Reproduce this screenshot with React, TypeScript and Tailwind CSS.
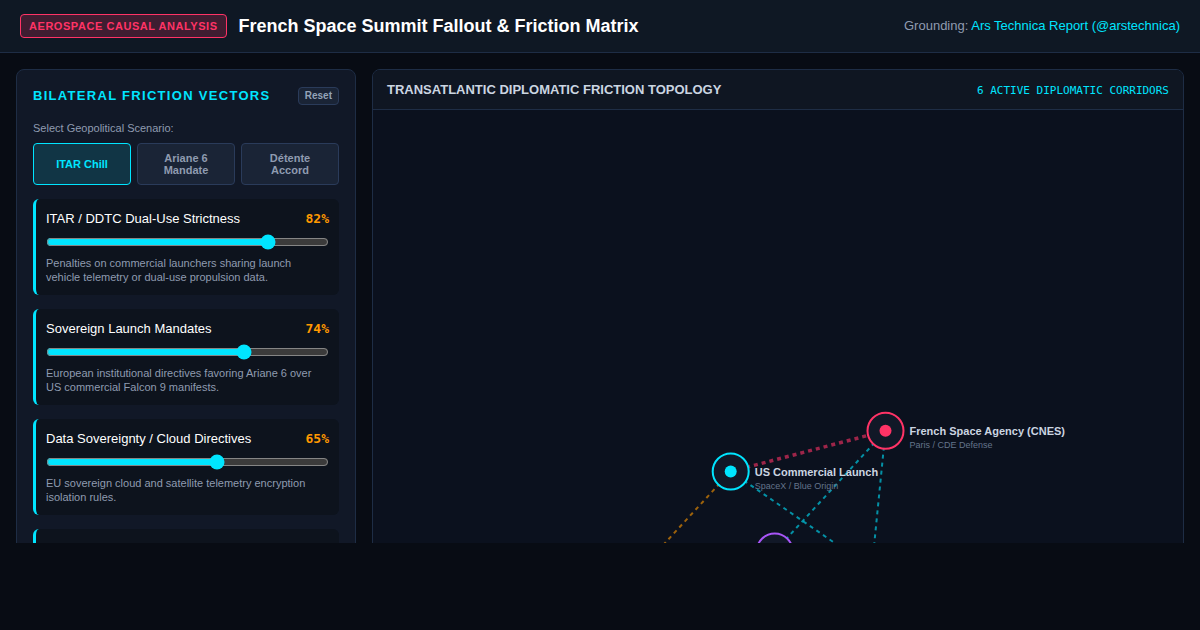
import { useState } from "react";

type Vector = {
  id: string;
  label: string;
  value: number;
  note: string;
};

type Node = {
  id: string;
  x: number;
  y: number;
  color: string;
  name?: string;
  sub?: string;
};

type Link = {
  from: string;
  to: string;
  color: string;
  width: number;
};

const SCENARIOS = [
  { id: "itar", label: "ITAR Chill", values: [82, 74, 65] },
  { id: "ariane", label: "Ariane 6 Mandate", values: [60, 92, 70] },
  { id: "detente", label: "Détente Accord", values: [30, 35, 40] },
];

const VECTORS: Vector[] = [
  {
    id: "ddtc",
    label: "ITAR / DDTC Dual-Use Strictness",
    value: 82,
    note: "Penalties on commercial launchers sharing launch vehicle telemetry or dual-use propulsion data.",
  },
  {
    id: "launch",
    label: "Sovereign Launch Mandates",
    value: 74,
    note: "European institutional directives favoring Ariane 6 over US commercial Falcon 9 manifests.",
  },
  {
    id: "cloud",
    label: "Data Sovereignty / Cloud Directives",
    value: 65,
    note: "EU sovereign cloud and satellite telemetry encryption isolation rules.",
  },
];

const NODES: Node[] = [
  { id: "us", x: 357.7, y: 361.5, name: "US Commercial Launch", sub: "SpaceX / Blue Origin", color: "#00e5ff" },
  { id: "cnes", x: 512.5, y: 320.8, name: "French Space Agency (CNES)", sub: "Paris / CDE Defense", color: "#ff3366" },
  { id: "esa", x: 401.7, y: 441.5, color: "#a855f7" },
  { id: "state", x: 247, y: 482, color: "#ff9900" },
  { id: "ariane", x: 498.8, y: 458.5, color: "#00e5ff" },
];

const LINKS: Link[] = [
  { from: "us", to: "cnes", color: "#ff3366", width: 3.5 },
  { from: "cnes", to: "esa", color: "#00e5ff", width: 2 },
  { from: "cnes", to: "ariane", color: "#00e5ff", width: 2 },
  { from: "us", to: "ariane", color: "#00e5ff", width: 2 },
  { from: "us", to: "state", color: "#ff9900", width: 2 },
];

function VectorCard({ vector, value, onChange }: { vector: Vector; value: number; onChange: (v: number) => void }) {
  return (
    <div className="rounded-md border-l-3 border-[#00e5ff] bg-[#0d131d] px-2.5 pt-2.5 pb-[11px]">
      <div className="mb-[5px] flex items-baseline justify-between text-[13px] leading-5">
        <label htmlFor={vector.id} className="text-white">
          {vector.label}
        </label>
        <span className="font-['DejaVu_Sans_Mono',monospace] leading-4 font-bold text-[#ff9900]">{value}%</span>
      </div>
      <input
        id={vector.id}
        type="range"
        min={10}
        max={100}
        value={value}
        onChange={(e) => onChange(Number(e.target.value))}
        className="mb-1.5 block h-4 w-full accent-[#00e5ff] scheme-dark"
      />
      <p className="pr-2 text-[11px] leading-[14px] text-[#8f9bb0]">{vector.note}</p>
    </div>
  );
}

function Topology() {
  const find = (id: string) => NODES.find((n) => n.id === id)!;

  return (
    <svg width="810" height="640" viewBox="0 0 810 640" role="img" aria-label="Diplomatic friction topology">
      {LINKS.map((l) => {
        const a = find(l.from);
        const b = find(l.to);
        return (
          <line
            key={l.from + l.to}
            x1={a.x}
            y1={a.y}
            x2={b.x}
            y2={b.y}
            stroke={l.color}
            strokeWidth={l.width}
            strokeDasharray="4 4"
            opacity={0.6}
          />
        );
      })}
      {NODES.map((n) => (
        <g key={n.id}>
          <circle cx={n.x} cy={n.y} r="18" fill="#111827" stroke={n.color} strokeWidth="2" />
          <circle cx={n.x} cy={n.y} r="6" fill={n.color} />
          {n.name && (
            <>
              <text x={n.x + 24} y={n.y + 4} fill="#cbd5e1" className="text-[11px] font-bold">
                {n.name}
              </text>
              <text x={n.x + 24} y={n.y + 17} fill="#64748b" className="text-[9px]">
                {n.sub}
              </text>
            </>
          )}
        </g>
      ))}
    </svg>
  );
}

export default function App() {
  const [scenario, setScenario] = useState("itar");
  const [values, setValues] = useState(VECTORS.map((v) => v.value));

  const pick = (id: string) => {
    setScenario(id);
    setValues(SCENARIOS.find((s) => s.id === id)!.values);
  };

  return (
    <div className="min-h-screen bg-[#080c14] font-['Liberation_Sans',Arial,sans-serif] text-white">
      <header className="flex items-center justify-between border-b border-[#1e2d45] bg-[#0f1824] px-5 py-3.5">
        <div className="flex items-center gap-3">
          <span className="rounded-sm border border-[#ff3366] bg-[#3f1d31] px-2 text-[11px] leading-[22px] font-bold tracking-wider text-[#ff3366]">
            AEROSPACE CAUSAL ANALYSIS
          </span>
          <h1 className="text-lg leading-6 font-bold">French Space Summit Fallout &amp; Friction Matrix</h1>
        </div>
        <p className="text-[13px] leading-5 text-[#8f9bb0]">
          Grounding:{" "}
          <a href="#report" className="text-[#00e5ff]">
            Ars Technica Report (@arstechnica)
          </a>
        </p>
      </header>

      <main className="grid h-[calc(100vh-140px)] grid-cols-[340px_1fr] gap-4 overflow-hidden px-4 pt-4">
        {/* Control column */}
        <section className="rounded-lg border border-[#1e2d45] bg-[#111827] p-4">
          <div className="flex items-center justify-between">
            <h2 className="text-[13px] leading-5 font-bold tracking-widest text-[#00e5ff]">BILATERAL FRICTION VECTORS</h2>
            <button
              type="button"
              onClick={() => pick("itar")}
              className="rounded-sm border border-[#2a3b5a] bg-[#1a2436] px-1.5 text-[10px] leading-4 font-bold text-[#94a3b8]"
            >
              Reset
            </button>
          </div>
          <p className="mt-3.5 text-[11px] leading-4 text-[#8f9bb0]">Select Geopolitical Scenario:</p>
          <div className="mt-[7px] grid grid-cols-3 gap-1.5">
            {SCENARIOS.map((s) => (
              <button
                key={s.id}
                type="button"
                aria-pressed={s.id === scenario}
                onClick={() => pick(s.id)}
                className={`h-[42px] rounded-sm border px-4 text-[11px] leading-3 font-bold ${
                  s.id === scenario
                    ? "border-[#00e5ff] bg-[#113545] text-[#00e5ff]"
                    : "border-[#2a3b5a] bg-[#1a2436] text-[#8f9bb0]"
                }`}
              >
                {s.label}
              </button>
            ))}
          </div>
          <div className="mt-3.5 flex flex-col gap-3.5">
            {VECTORS.map((v, i) => (
              <VectorCard
                key={v.id}
                vector={v}
                value={values[i]}
                onChange={(next) => setValues(values.map((old, j) => (j === i ? next : old)))}
              />
            ))}
            <div className="h-24 rounded-md border-l-3 border-[#00e5ff] bg-[#0d131d]" />
          </div>
        </section>

        {/* Topology canvas */}
        <section className="overflow-hidden rounded-lg border border-[#1e2d45] bg-[#0b111e]">
          <div className="flex items-baseline justify-between border-b border-[#1e2d45] bg-[#0f1622] px-3.5 py-2.5">
            <h2 className="text-[13px] leading-[19px] font-bold text-[#cbd5e1]">
              TRANSATLANTIC DIPLOMATIC FRICTION TOPOLOGY
            </h2>
            <span className="font-['DejaVu_Sans_Mono',monospace] text-[11px] leading-4 text-[#00e5ff]">
              6 ACTIVE DIPLOMATIC CORRIDORS
            </span>
          </div>
          <Topology />
        </section>
      </main>
    </div>
  );
}
